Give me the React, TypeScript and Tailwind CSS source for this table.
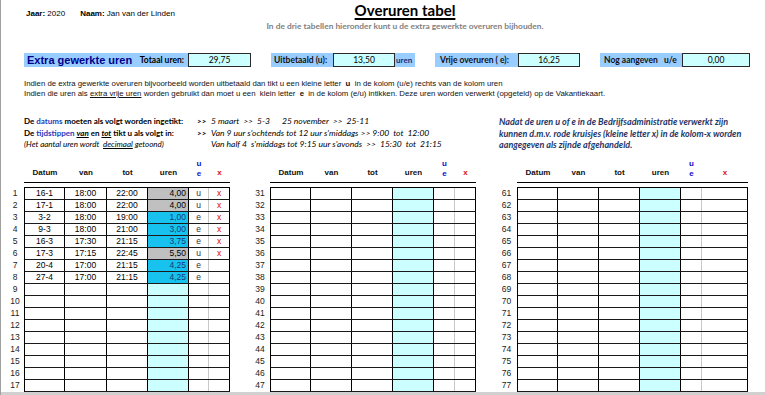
import React from "react";

type Row = {
  datum: string;
  van: string;
  tot: string;
  uren: string;
  ue: string;
  x: string;
};

const ROWS: Row[] = [
  { datum: "16-1", van: "18:00", tot: "22:00", uren: "4,00", ue: "u", x: "x" },
  { datum: "17-1", van: "18:00", tot: "22:00", uren: "4,00", ue: "u", x: "x" },
  { datum: "3-2", van: "18:00", tot: "19:00", uren: "1,00", ue: "e", x: "x" },
  { datum: "9-3", van: "18:00", tot: "21:00", uren: "3,00", ue: "e", x: "x" },
  { datum: "16-3", van: "17:30", tot: "21:15", uren: "3,75", ue: "e", x: "x" },
  { datum: "17-3", van: "17:15", tot: "22:45", uren: "5,50", ue: "u", x: "x" },
  { datum: "20-4", van: "17:00", tot: "21:15", uren: "4,25", ue: "e", x: "" },
  { datum: "27-4", van: "17:00", tot: "21:15", uren: "4,25", ue: "e", x: "" },
];

const ARIAL = "font-['Liberation_Sans',Arial,sans-serif]";
const CALIBRI = "font-['Lato','Noto_Sans',sans-serif]";

const COLS_A = ["w-[40px]", "w-[42px]", "w-[41px]", "w-[41px]", "w-[20px]", "w-[21px]"];
const COLS_B = ["w-[40px]", "w-[41px]", "w-[41px]", "w-[41px]", "w-[21px]", "w-[21px]"];
const COLS_C = ["w-[40px]", "w-[41px]", "w-[41px]", "w-[41px]", "w-[21px]", "w-[46px]"];

function urenBg(r?: Row) {
  if (!r) return "bg-[#ccffff]";
  return r.ue === "u" ? "bg-[#c0c0c0] text-black" : "bg-[#17c3ee] text-[#173a74]";
}

function Table({ start, cols, numW, data }: { start: number; cols: string[]; numW: string; data: Row[] }) {
  const rows = Array.from({ length: 17 }, (_, i) => i);
  return (
    <div className="flex">
      <div className={`${numW} shrink-0 pt-[29px]`}>
        {rows.map((i) => (
          <div key={i} className="flex h-[12px] items-center justify-center text-[8.5px] text-[#222]">
            {start + i}
          </div>
        ))}
      </div>
      <div className="shrink-0">
        <div className="flex h-[25px] border-b border-black pl-px text-[8px] font-bold text-[#111]">
          {["Datum", "van", "tot", "uren"].map((h, i) => (
            <div key={h} className={`${cols[i]} flex items-end justify-center pb-[3px]`}>
              {h}
            </div>
          ))}
          <div className={`${cols[4]} flex flex-col items-center justify-end pb-[3px] leading-[10px] text-[#1010c8]`}>
            <span>u</span>
            <span>e</span>
          </div>
          <div className={`${cols[5]} flex items-end justify-center pb-[3px] text-[#e01010]`}>x</div>
        </div>
        <div className="mt-[4px] border-l border-t border-black">
          {rows.map((i) => {
            const r = data[i];
            return (
              <div key={i} className="flex h-[12px] border-b border-[#1a1a1a] text-[8.5px] leading-[11px]">
                <div className={`${cols[0]} border-r border-black text-center`}>{r?.datum}</div>
                <div className={`${cols[1]} border-r border-black text-center`}>{r?.van}</div>
                <div className={`${cols[2]} border-r border-black text-center`}>{r?.tot}</div>
                <div className={`${cols[3]} border-r border-black pr-[2px] text-right ${urenBg(r)}`}>
                  {r?.uren}
                </div>
                <div className={`${cols[4]} border-r border-[#c8c8c8] text-center text-[#333]`}>{r?.ue}</div>
                <div className={`${cols[5]} border-r border-black text-center text-[#e00000]`}>{r?.x}</div>
              </div>
            );
          })}
        </div>
      </div>
    </div>
  );
}

function Label({ w, children }: { w: string; children: React.ReactNode }) {
  return (
    <div className={`${w} flex items-center bg-[#99ccff] pl-[3px] text-[8.5px] font-bold text-[#111] ${CALIBRI}`}>
      {children}
    </div>
  );
}

function Box({ w, value }: { w: string; value: string }) {
  return (
    <div className={`${w} flex items-center justify-center border border-[#2a2a2a] bg-[#ccffff] text-[8.5px] ${CALIBRI}`}>
      {value}
    </div>
  );
}

export default function App() {
  return (
    <div className={`flex h-[395px] w-[765px] flex-col overflow-hidden border-l border-[#a0a0a0] bg-white text-black ${ARIAL}`}>
      {/* kop */}
      <div className="flex h-[53px] shrink-0">
        <div className="flex w-[262px] gap-[15px] pl-[25px] pt-[8px] text-[8px]">
          <span>
            <b>Jaar:</b> 2020
          </span>
          <span>
            <b>Naam:</b> Jan van der Linden
          </span>
        </div>
        <div className={`w-[284px] text-center ${CALIBRI}`}>
          <div className="pt-px text-[15px] font-bold leading-[18px] underline decoration-[1.5px] underline-offset-2">
            Overuren tabel
          </div>
          <div className="mt-[1px] whitespace-nowrap text-[8.4px] font-bold text-[#7f7f7f]">
            In de drie tabellen hieronder kunt u de extra gewerkte overuren bijhouden.
          </div>
        </div>
      </div>

      {/* totalen */}
      <div className="flex h-[14px] shrink-0 pl-[23px]">
        <div className="flex w-[164px] items-center justify-between bg-[#99ccff] pl-[3px] pr-[4px]">
          <span className="text-[11px] font-bold text-[#00008b]">Extra gewerkte uren</span>
          <span className={`text-[8.5px] font-bold ${CALIBRI}`}>Totaal uren:</span>
        </div>
        <Box w="w-[63px]" value="29,75" />
        <div className="w-[20px]" />
        <Label w="w-[62px]">Uitbetaald (u):</Label>
        <Box w="w-[62px]" value="13,50" />
        <div className={`flex w-[20px] items-center bg-[#99ccff] pl-px text-[8px] font-bold text-[#1a2a7a] ${CALIBRI}`}>
          uren
        </div>
        <div className="w-[20px]" />
        <Label w="w-[83px]">
          <span className="pl-[2px]">Vrije overuren ( e):</span>
        </Label>
        <Box w="w-[62px]" value="16,25" />
        <div className="w-[20px]" />
        <Label w="w-[82px]">
          <span className="whitespace-pre pl-[1px]">Nog aangeven   u/e</span>
        </Label>
        <Box w="w-[68px]" value="0,00" />
      </div>

      {/* uitleg */}
      <div className="mt-[12px] h-[20px] shrink-0 pl-[23px] text-[7.8px] leading-[10px] text-[#111]">
        <div className="whitespace-pre">
          Indien de extra gewerkte overuren bijvoorbeeld worden uitbetaald dan tikt u een kleine letter  <b>u</b>  in de kolom (u/e) rechts van de kolom uren
        </div>
        <div className="whitespace-pre">
          Indien die uren als <span className="underline">extra vrije uren</span> worden gebruikt dan moet u een  klein letter  <b>e</b>  in de kolom (e/u) intikken. Deze uren worden verwerkt (opgeteld) op de Vakantiekaart.
        </div>
      </div>

      {/* invoer-instructies */}
      <div className={`mt-[17px] flex h-[35px] shrink-0 pl-[23px] text-[8px] leading-[11.5px] ${CALIBRI}`}>
        <div className="w-[475px] shrink-0">
          <div className="flex whitespace-pre">
            <span className="w-[173px] font-bold">
              De <span className="text-[#1f3bc0]">datums</span> moeten als volgt worden ingetikt:
            </span>
            <span className="w-[14px] font-bold">&gt;&gt;</span>
            <span className="w-[71px] text-[8.5px] italic">5 maart  &gt;&gt;  5-3</span>
            <span className="text-[8.5px] italic">25 november  &gt;&gt;  25-11</span>
          </div>
          <div className="flex whitespace-pre">
            <span className="w-[173px] font-bold">
              De <span className="text-[#1f3bc0]">tijdstippen</span> <i className="underline">van</i> en <i className="underline">tot</i> tikt u als volgt in:
            </span>
            <span className="w-[14px] font-bold">&gt;&gt;</span>
            <span className="text-[8.5px] italic">Van 9 uur s'ochtends tot 12 uur s'middags &gt;&gt; 9:00  tot  12:00</span>
          </div>
          <div className="flex whitespace-pre">
            <span className="w-[187px] italic">
              (Het aantal uren wordt  <span className="underline">decimaal</span> getoond)
            </span>
            <span className="text-[8.5px] italic">Van half 4  s'middags tot 9:15 uur s'avonds  &gt;&gt;  15:30  tot  21:15</span>
          </div>
        </div>
        <div className="whitespace-nowrap text-[9px] font-bold italic text-[#1f3566]">
          <div>Nadat de uren u of e in de Bedrijfsadministratie verwerkt zijn</div>
          <div>kunnen d.m.v. rode kruisjes (kleine letter x) in de kolom-x worden</div>
          <div>aangegeven als zijnde afgehandeld.</div>
        </div>
      </div>

      {/* tabellen */}
      <div className="mt-[7px] flex shrink-0 pl-[5px]">
        <Table start={1} cols={COLS_A} numW="w-[18px]" data={ROWS} />
        <div className="w-[20px] shrink-0" />
        <Table start={31} cols={COLS_B} numW="w-[20px]" data={[]} />
        <div className="w-[20px] shrink-0" />
        <Table start={61} cols={COLS_C} numW="w-[21px]" data={[]} />
      </div>

      <div className="mt-auto h-[3px] shrink-0 bg-[#d0d0d0]" />
    </div>
  );
}
